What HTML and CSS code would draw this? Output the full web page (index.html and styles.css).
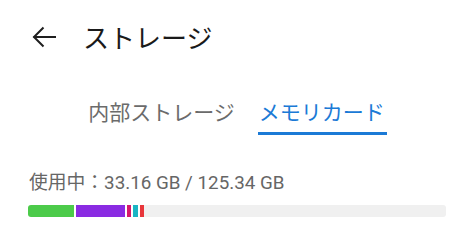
FILE: index.html
```html
<!DOCTYPE html>
<html lang="ja">
<head>
<meta charset="utf-8">
<link rel="stylesheet" href="styles.css">
</head>
<body>
<header class="header">
  <svg class="back" width="24" height="24" viewBox="0 0 24 24" fill="none" stroke="#1f1f1f" stroke-width="2" stroke-linecap="square">
    <path d="M23 12H2.5"/>
    <path d="M11.5 2.5L2 12l9.5 9.5" stroke-linejoin="miter" stroke-linecap="butt"/>
  </svg>
  <h1 class="title">ストレージ</h1>
</header>
<nav class="tabs">
  <div class="tab">内部ストレージ</div>
  <div class="tab active">メモリカード</div>
</nav>
<section class="usage">
  <div class="usage-text">使用中：33.16 GB / 125.34 GB</div>
  <div class="bar">
    <div class="seg green" style="width:46px"></div>
    <div class="seg purple" style="width:49px"></div>
    <div class="seg magenta" style="width:4px"></div>
    <div class="seg cyan" style="width:5px"></div>
    <div class="seg red last" style="width:4px"></div>
    <div class="seg rest"></div>
  </div>
</section>
</body>
</html>
```
FILE: styles.css
```css
html, body {
  margin: 0;
  padding: 0;
  background: #ffffff;
}
body {
  width: 475px;
  height: 250px;
  overflow: hidden;
  font-family: "Noto Sans CJK JP", "Noto Sans", sans-serif;
}
.header {
  height: 73px;
  display: flex;
  align-items: center;
  padding-left: 32px;
}
.back {
  display: block;
  margin-right: 27px;
}
.title {
  margin: 0;
  font-size: 26px;
  font-weight: 400;
  line-height: 30px;
  color: #1a1a1a;
}
.tabs {
  margin-top: 24px;
  display: flex;
  justify-content: center;
  gap: 23px;
}
.tab {
  font-size: 21px;
  line-height: 28px;
  color: #6b6b6b;
  padding-bottom: 7px;
  border-bottom: 3px solid transparent;
}
.tab.active {
  color: #1b7ad6;
  border-bottom-color: #1b7ad6;
  padding-left: 1px;
  padding-right: 2px;
}
.usage {
  margin-top: 37px;
  padding-left: 28px;
  padding-right: 29px;
}
.usage-text {
  font-family: "Roboto", "Noto Sans CJK JP", sans-serif;
  font-size: 18.8px;
  line-height: 22px;
  color: #666666;
  padding-left: 1px;
}
.bar {
  margin-top: 11px;
  height: 12px;
  display: flex;
}
.seg {
  height: 12px;
  margin-right: 2px;
  flex: none;
}
.seg.last {
  margin-right: 0;
}
.green {
  background: #4ccb4a;
  border-radius: 3px 0 0 3px;
}
.purple { background: #8a2be2; }
.magenta { background: #d6186c; }
.cyan { background: #1bb5c4; }
.red { background: #e8363b; }
.rest {
  flex: 1;
  margin-right: 0;
  background: #f0f0f0;
  border-radius: 0 3px 3px 0;
}
```
